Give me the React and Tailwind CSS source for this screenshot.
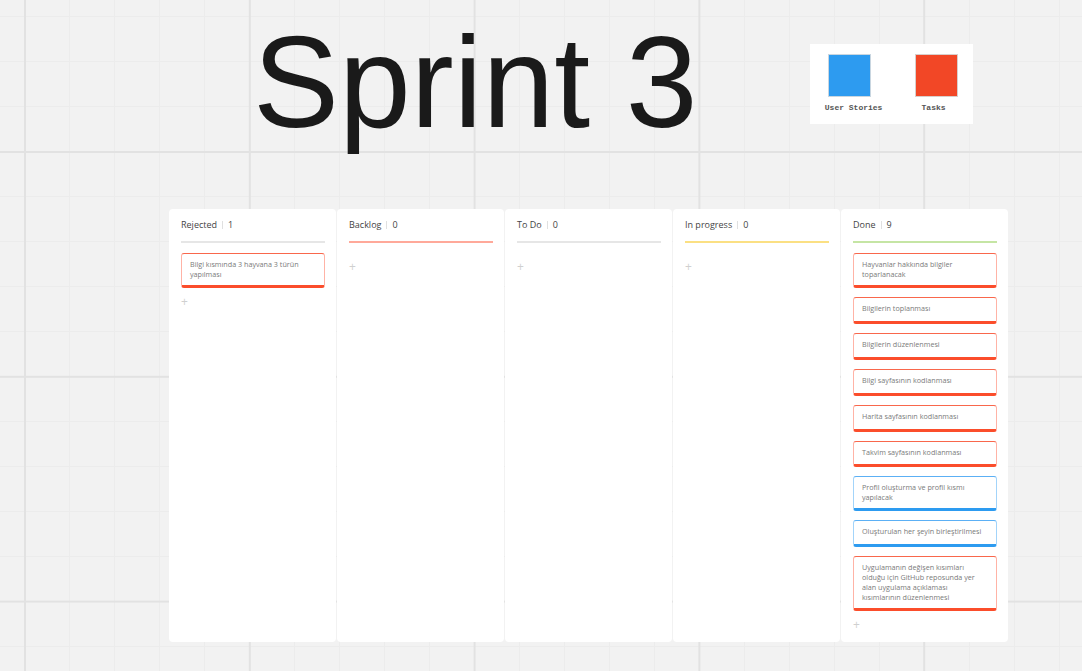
const RED = "border-[#ffb3a6] border-t-[#f9674c] border-b-[#fb4d2b]";
const BLUE = "border-[#a3d4fa] border-t-[#5cb0f5] border-b-[#2d9bf0]";

const columns = [
  {
    title: "Rejected",
    line: "bg-[#e6e6e6]",
    cards: [{ text: "Bilgi kısmında 3 hayvana 3 türün yapılması", tone: RED }],
  },
  { title: "Backlog", line: "bg-[#ffa99a]", cards: [] },
  { title: "To Do", line: "bg-[#e6e6e6]", cards: [] },
  { title: "In progress", line: "bg-[#fbe083]", cards: [] },
  {
    title: "Done",
    line: "bg-[#c5e5a4]",
    cards: [
      { text: "Hayvanlar hakkında bilgiler toparlanacak", tone: RED },
      { text: "Bilgilerin toplanması", tone: RED },
      { text: "Bilgilerin düzenlenmesi", tone: RED },
      { text: "Bilgi sayfasının kodlanması", tone: RED },
      { text: "Harita sayfasının kodlanması", tone: RED },
      { text: "Takvim sayfasının kodlanması", tone: RED },
      { text: "Profil oluşturma ve profil kısmı yapılacak", tone: BLUE },
      { text: "Oluşturulan her şeyin birleştirilmesi", tone: BLUE },
      {
        text: "Uygulamanın değişen kısımları olduğu için GitHub reposunda yer alan uygulama açıklaması kısımlarının düzenlenmesi",
        tone: RED,
      },
    ],
  },
];

function Card({ text, tone }) {
  return (
    <div className={`mb-[9px] min-h-[26.9px] rounded-[3px] border border-b-[3px] bg-white pt-[5px] pr-3 pb-[6px] pl-2 text-[7.2px] leading-[10px] text-[#7a7a7a] ${tone}`}>
      {text}
    </div>
  );
}

function Column({ title, line, cards }) {
  return (
    <section className="h-[433px] w-[167px] rounded-[4px] bg-white pr-[11px] pl-3">
      <div className="flex h-[32px] items-end pb-[10px] text-[9px] leading-[12px] text-[#444]">
        <span>{title}</span>
        <span className="mr-[5px] mb-[2px] ml-[5px] h-2 w-px bg-[#e0e0e0]" />
        <span>{cards.length}</span>
      </div>
      <div className={`h-[2px] ${line}`} />
      <div className="pt-[10px]">
        {cards.map((card) => (
          <Card key={card.text} {...card} />
        ))}
      </div>
      <div className="mt-[10px] text-[12px] leading-[8px] text-[#d0d0d0]">+</div>
    </section>
  );
}

export default function App() {
  return (
    <div className="h-[671px] w-[1082px] overflow-hidden bg-[#f2f2f2] bg-[linear-gradient(#e2e2e2_2px,transparent_2px),linear-gradient(90deg,#e2e2e2_2px,transparent_2px),linear-gradient(#ececec_1px,transparent_1px),linear-gradient(90deg,#ececec_1px,transparent_1px)] bg-[size:224.8px_224.8px,224.8px_224.8px,45px_45px,45px_45px] bg-[position:24px_151px,24px_151px,24px_16px,24px_16px] font-['Open_Sans',sans-serif]">
      <header className="flex h-[209px] items-start">
        <h1 className="mt-[7px] ml-[253px] font-['Liberation_Sans',sans-serif] text-[129px] leading-[150px] font-normal text-[#1a1a1a]">
          Sprint 3
        </h1>
        <div className="mt-[44px] ml-[112px] flex h-[80px] w-[163px] gap-[27px] bg-white pt-[10px] pl-[10px] font-['Liberation_Mono',monospace] text-[8px] leading-[10px] font-bold text-[#555]">
          <div className="flex w-[60px] flex-col items-center">
            <div className="h-[43px] w-[43px] border border-[#c9d6e0] bg-[#2d9bf0]" />
            <span className="mt-[6px] ml-2 whitespace-nowrap">User Stories</span>
          </div>
          <div className="flex w-[60px] flex-col items-center">
            <div className="h-[43px] w-[43px] border border-[#d8cfcc] bg-[#f24726]" />
            <span className="mt-[6px] mr-[6px]">Tasks</span>
          </div>
        </div>
      </header>
      <main className="ml-[169px] flex gap-px">
        {columns.map((column) => (
          <Column key={column.title} {...column} />
        ))}
      </main>
    </div>
  );
}
